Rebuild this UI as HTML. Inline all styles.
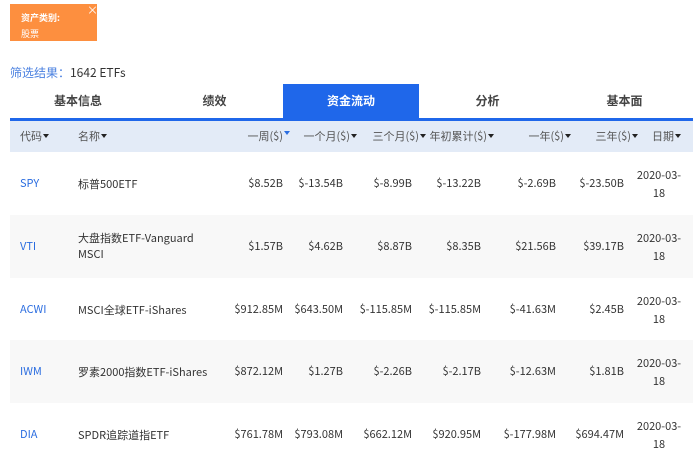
<!DOCTYPE html>
<html><head><meta charset="utf-8"><style>
*{margin:0;padding:0;box-sizing:border-box}
body{width:700px;height:455px;overflow:hidden;background:#fff;font-family:"Noto Sans CJK SC","Liberation Sans",sans-serif;color:#333;position:relative;font-size:11px;line-height:14px}
.a{position:absolute;white-space:nowrap}
.tag{left:10px;top:4px;width:87px;height:37px;background:#fd8f3f;color:#fff;font-size:9px;line-height:12px}
.tab{top:84px;height:34px;line-height:34px;text-align:center;font-size:12px;font-weight:bold;color:#444}
.hdr{left:10px;top:121px;width:683px;height:31px;background:#e3ebf7}
.h{top:129px;font-size:11px;color:#555}
.row{left:10px;width:683px;height:63px}
.t{color:#2b6de0}
.r{text-align:right}
.ar{display:inline-block;width:0;height:0;border-left:3.5px solid transparent;border-right:3.5px solid transparent;border-top:4px solid #222;vertical-align:2px;margin-left:1px}
</style></head><body>
<div class="a tag"><div class="a" style="left:77px;top:0;font-size:11px">×</div><div class="a" style="left:11px;top:8px;font-weight:bold">资产类别:</div><div class="a" style="left:11px;top:24px">股票</div></div>
<div class="a" style="left:10px;top:65px;font-size:12px;line-height:16px"><span style="color:#4a80e0">筛选结果：</span>1642 ETFs</div>
<div class="a tab" style="left:10px;width:136px">基本信息</div>
<div class="a tab" style="left:146px;width:137px">绩效</div>
<div class="a tab" style="left:283px;width:136px;background:#1f67ea;color:#fff">资金流动</div>
<div class="a tab" style="left:419px;width:137px">分析</div>
<div class="a tab" style="left:556px;width:137px">基本面</div>
<div class="a" style="left:10px;top:118px;width:683px;height:3px;background:#1f67ea"></div>
<div class="a hdr"></div>
<div class="a h" style="left:20px">代码<span class="ar"></span></div>
<div class="a h" style="left:78px">名称<span class="ar"></span></div>
<div class="a h r" style="right:410px">一周($)<span class="ar" style="border-top-color:#2b6de0;vertical-align:5px"></span></div>
<div class="a h r" style="right:343px">一个月($)<span class="ar"></span></div>
<div class="a h r" style="right:274px">三个月($)<span class="ar"></span></div>
<div class="a h r" style="right:206px">年初累计($)<span class="ar"></span></div>
<div class="a h r" style="right:129px">一年($)<span class="ar"></span></div>
<div class="a h r" style="right:62px">三年($)<span class="ar"></span></div>
<div class="a h" style="left:652px">日期<span class="ar"></span></div>

<div class="a row" style="top:152px"></div>
<div class="a row" style="top:215px;background:#f8f8f8"></div>
<div class="a row" style="top:277px"></div>
<div class="a row" style="top:340px;background:#f8f8f8"></div>

<div id="rows"></div>
<script>
var d=[["SPY","标普500ETF","$8.52B","$-13.54B","$-8.99B","$-13.22B","$-2.69B","$-23.50B"],
["VTI","大盘指数ETF-Vanguard<br>MSCI","$1.57B","$4.62B","$8.87B","$8.35B","$21.56B","$39.17B"],
["ACWI","MSCI全球ETF-iShares","$912.85M","$643.50M","$-115.85M","$-115.85M","$-41.63M","$2.45B"],
["IWM","罗素2000指数ETF-iShares","$872.12M","$1.27B","$-2.26B","$-2.17B","$-12.63M","$1.81B"],
["DIA","SPDR追踪道指ETF","$761.78M","$793.08M","$662.12M","$920.95M","$-177.98M","$694.47M"]];
var rr=[417,357,288,219,144,76],h="";
d.forEach(function(r,i){var c=152+i*62.8+31;
h+='<div class="a t" style="left:20px;top:'+(c-7)+'px">'+r[0]+'</div>';
var two=r[1].indexOf("<br>")>0;
h+='<div class="a" style="left:78px;top:'+(two?c-16:c-7)+'px;line-height:16px">'+r[1]+'</div>';
for(var k=0;k<6;k++)h+='<div class="a r" style="right:'+rr[k]+'px;top:'+(c-7)+'px">'+r[k+2]+'</div>';
h+='<div class="a" style="left:632px;width:54px;text-align:center;top:'+(c-17)+'px;line-height:18px">2020-03-<br>18</div>';});
document.getElementById("rows").innerHTML=h;
</script>
</body></html>
